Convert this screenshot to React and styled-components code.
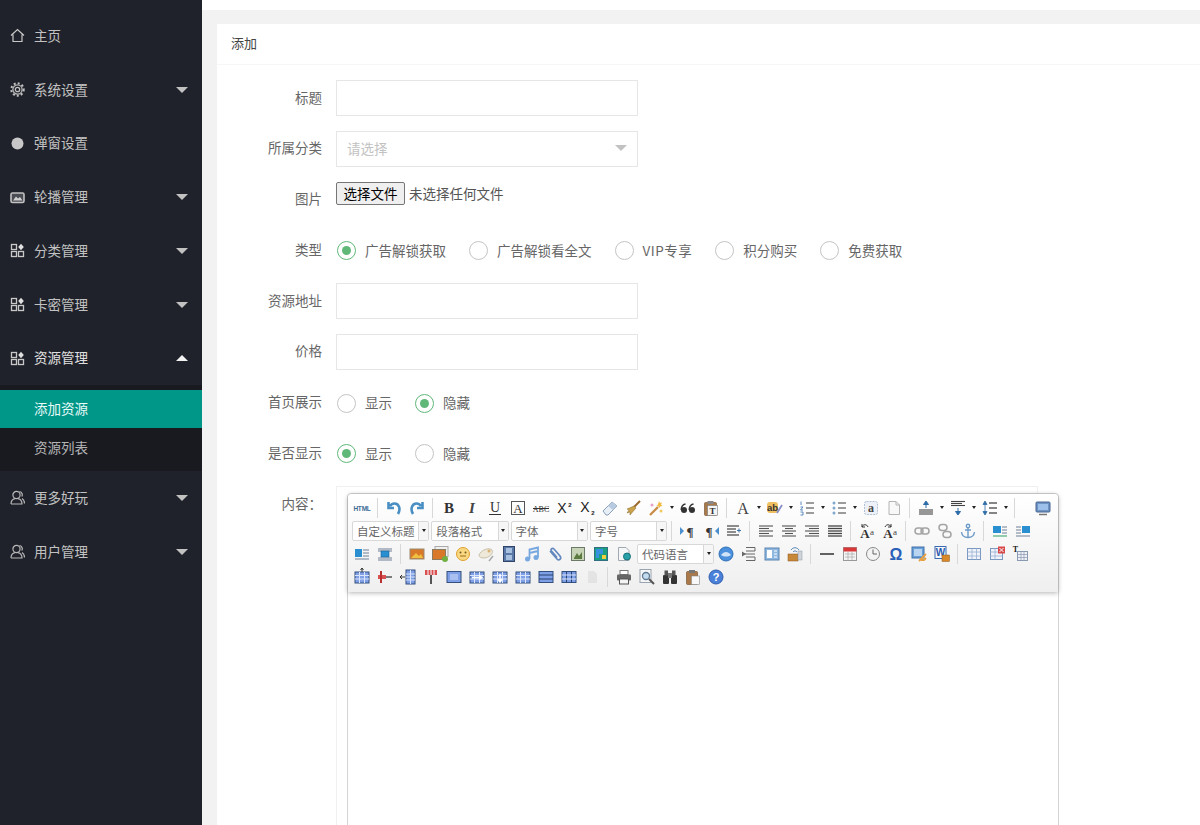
import React from 'react';
import styled, { createGlobalStyle } from 'styled-components';

const GlobalStyle = createGlobalStyle`
    html, body {
        margin: 0;
        height: 825px;
        overflow: hidden;
        background: #f2f2f2;
        font-family: "Noto Sans CJK SC", "Noto Sans", sans-serif;
    }
`

const Page = styled.div`
    display: grid;
    grid-template-columns: 202px 1fr;
    height: 825px;
    overflow: hidden;
`

const Sidebar = styled.nav`
    background: #20222b;
    padding-top: 9px;
    height: 825px;
    box-sizing: border-box;
`

const NavItem = styled.div`
    height: 53.75px;
    display: flex;
    align-items: center;
    padding: 0 14px 0 10px;
    gap: 9px;
    font-size: 13.5px;
    color: ${props => props.$open ? '#e0e0e0' : '#c2c2c2'};
`

const NavIcon = styled.svg`
    width: 15px;
    height: 15px;
    flex: none;
`

const NavText = styled.span`
    flex: 1;
    padding-bottom: 2px;
`

const Caret = styled.i`
    width: 0;
    height: 0;
    border-left: 6px solid transparent;
    border-right: 6px solid transparent;
    border-top: ${props => props.$up ? '0' : '6px solid #c2c2c2'};
    border-bottom: ${props => props.$up ? '6px solid #f2f2f2' : '0'};
`

const SubList = styled.div`
    background: #191a20;
    padding: 4.75px 0 4px;
`

const SubItem = styled.div`
    height: ${props => props.$active ? '38px' : '39px'};
    padding: 0 0 2px 34px;
    box-sizing: border-box;
    display: flex;
    align-items: center;
    font-size: 13.5px;
    background: ${props => props.$active ? '#009688' : 'transparent'};
    color: ${props => props.$active ? '#e8fbf8' : '#b4b4b4'};
`

const Main = styled.main`
    min-width: 0;
`

const TopBar = styled.div`
    height: 10px;
    background: #fff;
`

const Content = styled.div`
    padding: 14px 0 0 15px;
`

const Card = styled.section`
    background: #fff;
`

const CardHead = styled.div`
    height: 40px;
    line-height: 38px;
    padding-left: 14px;
    font-size: 13px;
    color: #444;
    border-bottom: 1px solid #f6f6f6;
`

const Form = styled.form`
    padding-top: 15px;
`

const Row = styled.div`
    display: flex;
    align-items: ${props => props.$top ? 'flex-start' : 'center'};
    height: ${props => props.$top ? 'auto' : '36px'};
    margin-bottom: 14.75px;
`

const Label = styled.label`
    width: 105px;
    margin-right: 14px;
    flex: none;
    text-align: right;
    font-size: 13.5px;
    color: #666;
    padding-top: ${props => props.$pad || 0}px;
    padding-bottom: ${props => props.$pad ? 0 : 3}px;
`

const TextInput = styled.div`
    width: 302px;
    height: 36.5px;
    box-sizing: border-box;
    border: 1px solid #e6e6e6;
    display: flex;
    align-items: center;
    justify-content: space-between;
    padding: 0 10px 2px;
    font-size: 13.5px;
    color: #c2c2c2;
`

const SelectArrow = styled.i`
    width: 0;
    height: 0;
    border-left: 6px solid transparent;
    border-right: 6px solid transparent;
    border-top: 6px solid #c2c2c2;
`

const FileRow = styled.div`
    display: flex;
    align-items: center;
    gap: 4px;
    align-self: flex-start;
    font-size: 13.5px;
    color: #555;
`

const FileButton = styled.button`
    width: 69px;
    height: 23px;
    padding: 0 0 1px;
    box-sizing: border-box;
    border: 1px solid #767676;
    border-radius: 2px;
    background: #efefef;
    color: #000;
    font: 13.5px "Noto Sans CJK SC", sans-serif;
`

const RadioGroup = styled.div`
    display: flex;
    margin-left: 1px;
    padding-top: 1px;
`

const Radio = styled.span`
    display: flex;
    align-items: center;
    gap: 9px;
    margin-right: 23px;
    font-size: 13.5px;
    color: #666;
`

const RadioText = styled.span`
    padding-bottom: 2px;
    letter-spacing: ${props => props.$latin ? '0.5px' : '0'};
`

const RadioMark = styled.i`
    width: 19px;
    height: 19px;
    box-sizing: border-box;
    border-radius: 50%;
    border: 1px solid ${props => props.$on ? '#5fb878' : '#c4c4c4'};
    display: flex;
    align-items: center;
    justify-content: center;

    &::after {
        content: "";
        width: 9px;
        height: 9px;
        border-radius: 50%;
        background: ${props => props.$on ? '#5fb878' : 'transparent'};
    }
`

const EditorFrame = styled.div`
    width: 702px;
    box-sizing: border-box;
    border: 1px solid #f0f0f0;
    padding: 6px 0 0 10px;
`

const Editor = styled.div`
    width: 712px;
    height: 340px;
    box-sizing: border-box;
    border: 1px solid #d4d4d4;
    border-radius: 4px 4px 0 0;
    background: #fff;
`

const Toolbar = styled.div`
    height: 98px;
    box-sizing: border-box;
    padding: 2px 0 0 2px;
    background: linear-gradient(#ffffff, #efefef);
    box-shadow: 0 1px 5px rgba(0, 0, 0, 0.3);
    border-radius: 4px 4px 0 0;
`

const ToolRow = styled.div`
    display: flex;
    align-items: center;
    height: 23px;
`

const ToolButton = styled.span`
    width: 23px;
    height: 23px;
    flex: none;
    margin-left: ${props => props.$gap || 0}px;
    display: flex;
    align-items: center;
    justify-content: center;
    opacity: ${props => props.$faded ? 0.25 : 1};
`

const ToolIcon = styled.svg`
    width: 16px;
    height: 16px;
    overflow: visible;
`

const ToolCaret = styled.i`
    width: 9px;
    display: flex;
    justify-content: center;

    &::after {
        content: "";
        border-left: 2.5px solid transparent;
        border-right: 2.5px solid transparent;
        border-top: 3px solid #222;
    }
`

const ToolSep = styled.i`
    width: 9px;
    height: 20px;
    display: flex;
    justify-content: center;

    &::after {
        content: "";
        width: 1px;
        background: #d8d8d8;
    }
`

const ToolSelect = styled.div`
    width: 77.3px;
    height: 20px;
    margin-left: 2px;
    box-sizing: border-box;
    border: 1px solid #d8d8d8;
    border-radius: 2px;
    background: #fff;
    display: flex;
    align-items: center;
    font-size: 11.5px;
    color: #666;
`

const ToolSelectText = styled.span`
    flex: 1;
    padding-left: 4px;
    white-space: nowrap;
    overflow: hidden;
`

const ToolSelectArrow = styled.i`
    width: 9px;
    height: 18px;
    flex: none;
    border-left: 1px solid #d8d8d8;
    background: #f6f6f6;
    display: flex;
    align-items: center;
    justify-content: center;

    &::after {
        content: "";
        border-left: 2.5px solid transparent;
        border-right: 2.5px solid transparent;
        border-top: 3px solid #222;
    }
`

const navIcons = {
    home: <path d="M1 7.5 7.5 1.5 14 7.5M3 6.5V13.5H12V6.5" fill="none" stroke="#c8c8c8" strokeWidth="1.2" />,
    gear: <>
        <circle cx="7.5" cy="7.5" r="2.2" fill="none" stroke="#c2c2c2" strokeWidth="1.3" />
        <circle cx="7.5" cy="7.5" r="4.6" fill="none" stroke="#b4b4b4" strokeWidth="1.3" />
        <circle cx="7.5" cy="7.5" r="6.2" fill="none" stroke="#c2c2c2" strokeWidth="2" strokeDasharray="2 2.1" />
    </>,
    dot: <circle cx="7.5" cy="7.5" r="6" fill="#c8c8c8" />,
    picture: <>
        <rect x="1" y="3" width="13" height="9.5" rx="1.5" fill="#4a4c54" stroke="#c2c2c2" strokeWidth="1.6" />
        <path d="M3 10.5 6 6.500l2 2 2-1.500 2.500 3.500z" fill="#d0d0d0" />
    </>,
    app: <>
        <rect x="1.500" y="1.500" width="5" height="5" fill="none" stroke="#c8c8c8" strokeWidth="1.300" />
        <rect x="1.500" y="8.500" width="5" height="5" fill="none" stroke="#c8c8c8" strokeWidth="1.300" />
        <rect x="8.500" y="8.500" width="5" height="5" fill="none" stroke="#c8c8c8" strokeWidth="1.300" />
        <path d="M11 .8 13.800 4 11 7.200 8.200 4z" fill="#e0e0e0" />
    </>,
    user: <>
        <circle cx="6.500" cy="5" r="3.600" fill="none" stroke="#b8b8b8" strokeWidth="1.200" />
        <path d="M1 14c0-3.200 2-5 4-5.400M8 8.600c2 .4 4 2.200 4 5.400H1M9.500 1.500c2.500.4 3.400 3 2.300 5M12 8.500c1.500.8 2.500 2.500 2.500 5" fill="none" stroke="#b8b8b8" strokeWidth="1.200" />
    </>,
}

const navTop = [
    { icon: 'home', text: '主页' },
    { icon: 'gear', text: '系统设置', caret: true },
    { icon: 'dot', text: '弹窗设置' },
    { icon: 'picture', text: '轮播管理', caret: true },
    { icon: 'app', text: '分类管理', caret: true },
    { icon: 'app', text: '卡密管理', caret: true },
]

function Nav({ icon, text, caret, open }) {
    return <NavItem $open={open}>
        <NavIcon viewBox="0 0 15 15">{navIcons[icon]}</NavIcon>
        <NavText>{text}</NavText>
        {caret && <Caret $up={open} />}
    </NavItem>
}

const serif = '"Liberation Serif", serif'
const sans = '"Liberation Sans", sans-serif'
const lines = (rows, color = '#555', w = 1) => rows.map(([x1, y, x2], i) =>
    <line key={i} x1={x1} y1={y} x2={x2} y2={y} stroke={color} strokeWidth={w} />)

const gridIcon = (extra, fill = '#7f9fe6') => <>
    <rect x="1" y="3" width="14" height="11" fill={fill} stroke="#33507f" />
    <path d="M1 6.500H15M1 10H15M5.500 3V14M10.500 3V14" stroke="#dbe6fb" strokeWidth="1" />
    {extra}
</>

const imageWrap = (y1, y2, x) => <>
    {lines([[1, 3, 15], [1, 5, 15], [1, 12, 15], [1, 14, 15]], '#6d7f95')}
    <rect x={x} y={y1} width="8" height={y2} fill="#2a8fd0" stroke="#1a5f98" strokeWidth=".6" />
</>

const toolIcons = {
    html: <text x="8" y="11" fontSize="6.500" fontWeight="700" letterSpacing="-.2" fill="#3d6d96" textAnchor="middle" fontFamily={sans}>HTML</text>,
    undo: <path d="M12 14C15 9 13 3.500 8.500 3.500 6.500 3.500 5 4.500 4 6M2.500 2V8H8" fill="none" stroke="#4a8fc4" strokeWidth="2.600" />,
    redo: <path d="M4 14C1 9 3 3.500 7.500 3.500 9.500 3.500 11 4.500 12 6M13.500 2V8H8" fill="none" stroke="#4a8fc4" strokeWidth="2.600" />,
    bold: <text x="8" y="13" fontSize="15" fontWeight="700" fill="#333" textAnchor="middle" fontFamily={serif}>B</text>,
    italic: <text x="8" y="13" fontSize="15" fontStyle="italic" fontWeight="700" fill="#444" textAnchor="middle" fontFamily={serif}>I</text>,
    underline: <>
        <text x="8" y="12" fontSize="14" fill="#333" textAnchor="middle" fontFamily={serif}>U</text>
        <line x1="2" y1="14.500" x2="14" y2="14.500" stroke="#333" />
    </>,
    fontborder: <>
        <rect x="1.500" y="1.500" width="13" height="13" fill="none" stroke="#555" />
        <text x="8" y="12.500" fontSize="13" fill="#333" textAnchor="middle" fontFamily={serif}>A</text>
    </>,
    strike: <>
        <text x="8" y="11.500" fontSize="8" fill="#333" textAnchor="middle" fontFamily={serif}>ABC</text>
        <line x1="0" y1="8.500" x2="16" y2="8.500" stroke="#333" />
    </>,
    sup: <>
        <text x="6" y="13" fontSize="14" fill="#222" textAnchor="middle" fontFamily={sans}>X</text>
        <text x="14" y="7" fontSize="6" fontWeight="700" fill="#222" textAnchor="middle" fontFamily={sans}>2</text>
    </>,
    sub: <>
        <text x="6" y="12" fontSize="14" fill="#222" textAnchor="middle" fontFamily={sans}>X</text>
        <text x="14" y="15" fontSize="6" fontWeight="700" fill="#222" textAnchor="middle" fontFamily={sans}>2</text>
    </>,
    eraser: <>
        <path d="M1 11 10 2l5 4-9 9H4z" fill="#e8eef6" stroke="#8aa0b8" />
        <path d="M10 2l5 4-4 4-5-4z" fill="#b8cbe0" />
    </>,
    brush: <>
        <path d="M15 1 9 7" stroke="#9a6a2c" strokeWidth="2" />
        <path d="M9 6 2 9l2 1-2 3 3-1 0 3 6-7z" fill="#c9a24c" stroke="#8a6a2a" strokeWidth=".5" />
    </>,
    wand: <>
        <path d="M2 15 10 7" stroke="#c98a44" strokeWidth="2.200" />
        <path d="M11 1l1 2 2-.5-1 2 1.500 1.500-2 .3L11 8l-.7-2-2-.5 1.700-1z" fill="#f0b840" />
        <circle cx="4" cy="5" r="1.500" fill="#e8a0c8" />
        <circle cx="13" cy="11" r="1.500" fill="#f0c860" />
    </>,
    quote: <>
        <circle cx="4" cy="10" r="3" fill="#333" />
        <circle cx="12" cy="10" r="3" fill="#333" />
        <path d="M1.200 10C1.200 6.500 3 4.500 5.500 4M9.200 10C9.200 6.500 11 4.500 13.500 4" fill="none" stroke="#333" strokeWidth="1.400" />
    </>,
    pasteText: <>
        <rect x="1.500" y="2.500" width="12" height="13" rx="1" fill="#a9794a" stroke="#6f4a28" strokeWidth=".6" />
        <rect x="4.500" y="1" width="6" height="3" fill="#888" />
        <rect x="4.500" y="5.500" width="10" height="10" fill="#f4f4f4" stroke="#777" strokeWidth=".6" />
        <text x="9.500" y="14" fontSize="9" fontWeight="700" fill="#333" textAnchor="middle" fontFamily={serif}>T</text>
    </>,
    fontColor: <text x="8" y="14" fontSize="16" fill="#444" textAnchor="middle" fontFamily={serif}>A</text>,
    highlight: <>
        <rect x="0" y="2" width="11" height="11" rx="3" fill="#f0c060" />
        <text x="5.500" y="11" fontSize="9.500" fontWeight="700" fill="#333" textAnchor="middle" fontFamily={sans}>ab</text>
        <path d="M10 13 15 5" stroke="#8a8ac8" strokeWidth="1.800" />
    </>,
    ol: <>
        {lines([[7, 3, 15], [7, 8, 15], [7, 13, 15]], '#666', 1.300)}
        <path d="M2 1.500V5M1.500 7H4L1.500 10H4M1.500 12H4V15H1.500" fill="none" stroke="#4a80b8" strokeWidth=".9" />
    </>,
    ul: <>
        {lines([[7, 3, 15], [7, 8, 15], [7, 13, 15]], '#666', 1.300)}
        <circle cx="3" cy="3" r="1.500" fill="#7fa8cc" />
        <circle cx="3" cy="8" r="1.500" fill="#7fa8cc" />
        <circle cx="3" cy="13" r="1.500" fill="#7fa8cc" />
    </>,
    selectAll: <>
        <rect x="1.500" y="1.500" width="13" height="13" rx="2" fill="#eef2f8" stroke="#b0c0d4" strokeDasharray="2 1" />
        <text x="8" y="12" fontSize="12" fontWeight="700" fill="#444" textAnchor="middle" fontFamily={serif}>a</text>
    </>,
    doc: <path d="M3 1.500H10L13.500 5V14.500H3zM10 1.500V5H13.500" fill="#f8f8f8" stroke="#b4b4b4" />,
    spaceTop: <>
        {lines([[1, 10, 15], [1, 12, 15], [1, 14, 15]], '#444', 1.100)}
        <path d="M8 1 5.500 4.500H10.500zM8 4V8" fill="#2f6da8" stroke="#2f6da8" />
    </>,
    spaceBottom: <>
        {lines([[1, 1.500, 15], [1, 3.500, 12], [1, 5.500, 15]], '#444', 1.100)}
        <path d="M8 15 5.500 11.500H10.500zM8 8V12" fill="#2f6da8" stroke="#2f6da8" />
    </>,
    lineHeight: <>
        {lines([[7, 3, 15], [7, 8, 15], [7, 13, 15]], '#444', 1.300)}
        <path d="M3 1 1 4.500H5zM3 15 1 11.500H5zM3 4V12" fill="#2f6da8" stroke="#2f6da8" strokeWidth=".8" />
    </>,
    preview: <>
        <rect x="1" y="2" width="14" height="10" rx="1" fill="#6f93c4" stroke="#46658f" />
        <rect x="3" y="4" width="10" height="6" fill="#9dc0ea" />
        <path d="M4 14.500H12" stroke="#777" strokeWidth="1.500" />
    </>,
    ltr: <>
        <path d="M0 4 4 8 0 12z" fill="#4a90d0" />
        <text x="10" y="13" fontSize="13" fontWeight="700" fill="#333" textAnchor="middle" fontFamily={serif}>¶</text>
    </>,
    rtl: <>
        <path d="M16 4 12 8 16 12z" fill="#4a90d0" />
        <text x="6" y="13" fontSize="13" fontWeight="700" fill="#333" textAnchor="middle" fontFamily={serif}>¶</text>
    </>,
    indent: <>
        {lines([[1, 3, 13], [1, 6, 10], [1, 9, 10], [1, 12, 13]], '#444', 1.200)}
        <path d="M11 7.500H15M13 5.500V9.500" stroke="#3a70a8" />
    </>,
    alignLeft: lines([[1, 3, 15], [1, 5.500, 11], [1, 8, 15], [1, 10.500, 11], [1, 13, 15]], '#555', 1.100),
    alignCenter: lines([[1, 3, 15], [4, 5.500, 12], [1, 8, 15], [4, 10.500, 12], [1, 13, 15]], '#555', 1.100),
    alignRight: lines([[1, 3, 15], [5, 5.500, 15], [1, 8, 15], [5, 10.500, 15], [1, 13, 15]], '#555', 1.100),
    justify: lines([[1, 3, 15], [1, 5.500, 15], [1, 8, 15], [1, 10.500, 15], [1, 13, 15]], '#444', 1.300),
    upper: <>
        <text x="6" y="15" fontSize="13" fontWeight="700" fill="#333" textAnchor="middle" fontFamily={serif}>A</text>
        <text x="13" y="12" fontSize="9" fill="#444" textAnchor="middle" fontFamily={serif}>a</text>
        <path d="M3 4C4 1 8 1 9 4M3 1V4H6" fill="none" stroke="#333" />
    </>,
    lower: <>
        <text x="6" y="15" fontSize="13" fontWeight="700" fill="#333" textAnchor="middle" fontFamily={serif}>A</text>
        <text x="13" y="12" fontSize="9" fill="#444" textAnchor="middle" fontFamily={serif}>a</text>
        <path d="M9 4C8 1 4 1 3 4M9 1V4H6" fill="none" stroke="#333" />
    </>,
    link: <>
        <rect x="1" y="5" width="8" height="6" rx="3" fill="none" stroke="#a4a4a4" strokeWidth="1.500" />
        <rect x="7" y="5" width="8" height="6" rx="3" fill="none" stroke="#a4a4a4" strokeWidth="1.500" />
    </>,
    unlink: <>
        <rect x="2" y="1.500" width="8" height="6" rx="3" fill="none" stroke="#a4a4a4" strokeWidth="1.500" />
        <rect x="6" y="8.500" width="8" height="6" rx="3" fill="none" stroke="#a4a4a4" strokeWidth="1.500" />
    </>,
    anchor: <g fill="none" stroke="#6d9cc8" strokeWidth="1.400">
        <circle cx="8" cy="3" r="1.700" />
        <path d="M8 5V14.500M5 7H11M1.500 9C2 13 5 14.500 8 14.500S14 13 14.500 9" />
    </g>,
    imgLeft: <>
        <rect x="1" y="3" width="8" height="7" fill="#2a8fd0" />
        {lines([[10, 4, 15], [10, 7, 15], [10, 10, 15]], '#6d7f95')}
        <line x1="1" y1="13" x2="15" y2="13" stroke="#2aa060" />
    </>,
    imgRight: <>
        <rect x="7" y="3" width="8" height="7" fill="#2a8fd0" />
        {lines([[1, 4, 6], [1, 7, 6], [1, 10, 6], [1, 13, 15]], '#6d7f95')}
    </>,
    imgNone: <>
        <rect x="1" y="3" width="7" height="8" fill="#2a8fd0" />
        {lines([[9, 4, 15], [9, 7, 15], [9, 10, 15], [1, 13, 15]], '#6d7f95')}
    </>,
    imgCenter: imageWrap(5, 6, 4),
    image: <>
        <rect x="1" y="3" width="14" height="10" fill="#d87828" stroke="#9a8a70" />
        <path d="M2 12 7 7l3 3 2-2 2 4z" fill="#f0c040" />
    </>,
    images: <>
        <rect x="3" y="0.500" width="13" height="10" fill="#f0f0f0" stroke="#aaa" />
        <rect x="0.500" y="3.500" width="13" height="10" fill="#d87828" stroke="#8a7a60" />
        <circle cx="13" cy="13" r="3" fill="#70b040" />
    </>,
    emoji: <>
        <circle cx="8" cy="8" r="6.500" fill="#f8d880" stroke="#e0a030" />
        <circle cx="5.500" cy="6.500" r="1" fill="#7a5a20" />
        <circle cx="10.500" cy="6.500" r="1" fill="#7a5a20" />
        <path d="M5 10H11" stroke="#a06a20" />
    </>,
    scrawl: <>
        <path d="M1 9C3 4 11 1 14 4 16 7 11 12 6 12 3 12 1 11 1 9z" fill="#eee8d8" stroke="#c8c0a8" />
        <circle cx="11" cy="5" r="1.500" fill="#d8b070" />
        <path d="M11 15 15 10" stroke="#a8a8a8" strokeWidth="1.500" />
    </>,
    video: <>
        <rect x="2.500" y="0.500" width="11" height="15" fill="#5a78a8" stroke="#2f4468" />
        <rect x="5" y="2" width="6" height="5" fill="#a8c0e0" />
        <rect x="5" y="9" width="6" height="5" fill="#a8c0e0" />
    </>,
    music: <>
        <path d="M5.500 13V3.500L14 1.500V11.500M5.500 7 14 5" fill="none" stroke="#78a8e0" strokeWidth="1.800" />
        <circle cx="3.500" cy="13" r="2.500" fill="#78a8e0" />
        <circle cx="12" cy="11.500" r="2.500" fill="#78a8e0" />
    </>,
    attach: <path d="M3 5 10 13C12 15 15 13 13 10L7 3C5.500 1.500 3 3 4.500 5L10 11.500" fill="none" stroke="#6488c0" strokeWidth="1.700" />,
    map: <>
        <rect x="1.500" y="1.500" width="13" height="13" fill="#c8d4b8" stroke="#6d7a6a" />
        <path d="M4 12 7 7l2 3 3-4v7H4z" fill="#5a7a40" />
    </>,
    gmap: <>
        <rect x="1.500" y="1.500" width="13" height="13" fill="#18a080" stroke="#2f6f80" />
        <path d="M3 3H10V8H6V12H3z" fill="#3890e0" />
        <path d="M9 9H13V13H9z" fill="#f0d040" />
    </>,
    frame: <>
        <path d="M2.500 1.500H10L13 4.500V14.500H2.500z" fill="#f4f6f8" stroke="#a0a8b0" />
        <circle cx="11" cy="10.500" r="3.500" fill="#28a0a8" stroke="#1a7078" />
    </>,
    webapp: <>
        <circle cx="8" cy="8" r="7" fill="#4a90dc" stroke="#3070b8" />
        <path d="M3 9C6 5 10 5 13 9 10 11 6 11 3 9z" fill="#cfe2f8" />
    </>,
    pagebreak: <>
        <path d="M5 1.500H14V5H5M2 8H14M5 11H14V14.500H5" fill="none" stroke="#666" />
        <path d="M5 8 1 5.500V10.500z" fill="#666" />
    </>,
    template: <>
        <rect x="1" y="2" width="14" height="12" fill="#8fb8e0" stroke="#5a84b0" />
        <rect x="3" y="4" width="5" height="8" fill="#fff" />
        <path d="M10 5H13M10 8H13M10 11H13" stroke="#fff" />
    </>,
    background: <>
        <path d="M4 4C6 1 10 1 12 4M6 6C7 4.500 9 4.500 10 6" fill="none" stroke="#5a88b8" />
        <rect x="1" y="8" width="10" height="7" fill="#c8883a" stroke="#8a5a20" strokeWidth=".5" />
        <rect x="11" y="5" width="4" height="9" fill="#d0d4d8" stroke="#8a98a8" strokeWidth=".5" />
    </>,
    hr: <line x1="1" y1="8" x2="15" y2="8" stroke="#222" strokeWidth="1.400" />,
    date: <>
        <rect x="1.500" y="1.500" width="13" height="13" fill="#f4f4f4" stroke="#999" />
        <rect x="1.500" y="1.500" width="13" height="4" fill="#d83838" />
        <path d="M3 8H13M3 11H13M6 6V14M10 6V14" stroke="#aaa" strokeWidth=".7" />
    </>,
    time: <>
        <circle cx="8" cy="8" r="6.500" fill="#f4f4f4" stroke="#888" />
        <path d="M8 3.500V8H12" fill="none" stroke="#666" />
    </>,
    omega: <text x="8" y="14" fontSize="16" fontWeight="700" fill="#2a5fb8" textAnchor="middle" fontFamily={sans}>Ω</text>,
    wordImage: <>
        <rect x="1" y="1" width="12" height="11" fill="#6aa0d8" stroke="#4070a8" />
        <rect x="3" y="3" width="8" height="7" fill="#b8d4f0" />
        <path d="M8 15 15 8M10 14 13 14 15 12" stroke="#e8a040" strokeWidth="1.800" fill="none" />
    </>,
    wordPaste: <>
        <rect x="1" y="0.500" width="11" height="12" fill="#f8f8f8" stroke="#3a6ab0" />
        <text x="6.500" y="10" fontSize="10" fontWeight="700" fill="#2a5ab0" textAnchor="middle" fontFamily={sans}>W</text>
        <rect x="8" y="9" width="7.500" height="6.500" fill="#d88828" stroke="#8a5a20" strokeWidth=".5" />
    </>,
    table: <>
        <rect x="1.500" y="2.500" width="13" height="11" fill="#f0f4fa" stroke="#7a98c0" />
        <path d="M1.500 6H14.500M1.500 10H14.500M6 2.500V13.500M10.500 2.500V13.500" stroke="#98b0d0" strokeWidth=".8" />
    </>,
    delTable: <>
        <rect x="1.500" y="2.500" width="12" height="11" fill="#f0f4fa" stroke="#7a98c0" />
        <path d="M1.500 6H13.500M1.500 10H13.500M6 2.500V13.500" stroke="#98b0d0" strokeWidth=".8" />
        <rect x="9" y="0.500" width="7" height="7" fill="#d84848" />
        <path d="M10.500 2 14.500 6M14.500 2 10.500 6" stroke="#fff" />
    </>,
    caption: <>
        <text x="3.500" y="6" fontSize="8" fontWeight="700" fill="#222" textAnchor="middle" fontFamily={serif}>T</text>
        <rect x="5.500" y="5.500" width="10" height="9" fill="#eef2f8" stroke="#8a9ab0" />
        <path d="M5.500 8.500H15.500M5.500 11.500H15.500M9 5.500V14.500M12 5.500V14.500" stroke="#8a9ab0" strokeWidth=".7" />
    </>,
    insRow: gridIcon(<path d="M8 -1V3M6.500 1 8 -1 9.500 1" fill="none" stroke="#333" />),
    delRow: <>
        <rect x="1" y="6" width="8" height="4" fill="#d85050" />
        <path d="M4 2V14" stroke="#b83030" strokeWidth="2" />
        <path d="M9 8H15" stroke="#555" strokeWidth="1.500" />
    </>,
    insCol: <>
        <path d="M5 8H0M2 6 0 8 2 10" fill="none" stroke="#333" />
        <rect x="6" y="1" width="9" height="14" fill="#7f9fe6" stroke="#33507f" />
        <path d="M6 5H15M6 8H15M6 11H15M10.500 1V15" stroke="#dbe6fb" />
    </>,
    delCol: <>
        <path d="M2 1H14V6H2z" fill="#d85050" />
        <path d="M5 1V6M8 1V15M11 1V6" stroke="#fff" />
        <path d="M8 6V15" stroke="#555" strokeWidth="2" />
    </>,
    merge: <>
        <rect x="1" y="2.500" width="14" height="11" fill="#7f9fe6" stroke="#33507f" />
        <rect x="4" y="5" width="8" height="6" fill="#aac0f0" />
    </>,
    mergeRight: gridIcon(<path d="M3 8.500H12M10 6.500 13 8.500 10 10.500" fill="none" stroke="#fff" strokeWidth="1.500" />),
    mergeDown: gridIcon(<path d="M8 5V12M6 10 8 13 10 10" fill="none" stroke="#fff" strokeWidth="1.500" />),
    splitCells: gridIcon(null),
    splitRows: <>
        <rect x="1" y="2.500" width="14" height="11" fill="#7f9fe6" stroke="#33507f" />
        <path d="M1 6H15M1 10H15" stroke="#26406f" />
    </>,
    splitCols: <>
        <rect x="1" y="2.500" width="14" height="11" fill="#7f9fe6" stroke="#33507f" />
        <path d="M5.500 2.500V13.500M10.500 2.500V13.500" stroke="#26406f" />
        <path d="M1 6H15M1 10H15" stroke="#dbe6fb" />
    </>,
    print: <>
        <rect x="4" y="1.500" width="8" height="4" fill="#fff" stroke="#777" />
        <rect x="1" y="5.500" width="14" height="6" rx="1" fill="#666" />
        <rect x="3.500" y="10" width="9" height="5" fill="#f4f4f4" stroke="#555" />
    </>,
    search: <>
        <rect x="1" y="0.500" width="11" height="13" fill="#f4f6f8" stroke="#98a4b0" />
        <circle cx="7" cy="7" r="3.500" fill="#c4dcf0" stroke="#607890" strokeWidth="1.300" />
        <path d="M10 10 15 15" stroke="#555" strokeWidth="2" />
    </>,
    binoculars: <>
        <rect x="1" y="6" width="6" height="9" rx="1" fill="#333" />
        <rect x="9" y="6" width="6" height="9" rx="1" fill="#333" />
        <rect x="2.500" y="1.500" width="3.500" height="5" fill="#555" />
        <rect x="10" y="1.500" width="3.500" height="5" fill="#555" />
        <rect x="6" y="4" width="4" height="5" fill="#777" />
    </>,
    paste: <>
        <rect x="1.500" y="2.500" width="11" height="13" rx="1" fill="#a9794a" stroke="#6f4a28" strokeWidth=".6" />
        <rect x="4" y="1" width="6" height="3" fill="#777" />
        <rect x="6.500" y="7" width="8" height="8.500" fill="#f8f8f8" stroke="#888" strokeWidth=".6" />
    </>,
    help: <>
        <circle cx="8" cy="8" r="7" fill="#4a80d8" stroke="#2f5fb0" />
        <text x="8" y="12" fontSize="11" fontWeight="700" fill="#fff" textAnchor="middle" fontFamily={sans}>?</text>
    </>,
    blank: <path d="M4 2H10L13 5V14H4z" fill="#bbb" />,
}

// | separator, ^ small caret after the button before it, [text] select box
const toolRows = [
    'html | undo redo | bold italic underline fontborder strike sup sub eraser brush wand ^ quote pasteText | fontColor ^ highlight ^ ol ^ ul ^ selectAll doc | spaceTop ^ spaceBottom ^ lineHeight ^ | +preview',
    '[自定义标题] [段落格式] [字体] [字号] | ltr rtl indent | alignLeft alignCenter alignRight justify | upper lower | link unlink anchor | imgLeft imgRight',
    'imgNone imgCenter | image images emoji scrawl video music attach map gmap frame [代码语言] webapp pagebreak template background | hr date time omega wordImage wordPaste | table delTable caption',
    'insRow delRow insCol delCol merge mergeRight mergeDown splitCells splitRows splitCols ~blank | print search binoculars paste help',
]

function Tool({ token }) {
    if (token === '|') return <ToolSep />
    if (token === '^') return <ToolCaret />
    if (token[0] === '[') {
        return <ToolSelect>
            <ToolSelectText>{token.slice(1, -1)}</ToolSelectText>
            <ToolSelectArrow />
        </ToolSelect>
    }
    const name = token.replace(/[+~]/, '')
    return <ToolButton $gap={token[0] === '+' ? 12 : 0} $faded={token[0] === '~'}>
        <ToolIcon viewBox="0 0 16 16">{toolIcons[name]}</ToolIcon>
    </ToolButton>
}

function RadioOption({ text, on, latin }) {
    return <Radio>
        <RadioMark $on={on} />
        <RadioText $latin={latin}>{text}</RadioText>
    </Radio>
}

function App() {
    return <>
        <GlobalStyle />
        <Page>
            <Sidebar>
                {navTop.map(item => <Nav key={item.text} {...item} />)}
                <Nav icon="app" text="资源管理" caret open />
                <SubList>
                    <SubItem $active>添加资源</SubItem>
                    <SubItem>资源列表</SubItem>
                </SubList>
                <Nav icon="user" text="更多好玩" caret />
                <Nav icon="user" text="用户管理" caret />
            </Sidebar>
            <Main>
                <TopBar />
                <Content>
                    <Card>
                        <CardHead>添加</CardHead>
                        <Form>
                            <Row>
                                <Label>标题</Label>
                                <TextInput />
                            </Row>
                            <Row>
                                <Label>所属分类</Label>
                                <TextInput>请选择<SelectArrow /></TextInput>
                            </Row>
                            <Row>
                                <Label>图片</Label>
                                <FileRow>
                                    <FileButton type="button">选择文件</FileButton>
                                    未选择任何文件
                                </FileRow>
                            </Row>
                            <Row>
                                <Label>类型</Label>
                                <RadioGroup>
                                    <RadioOption text="广告解锁获取" on />
                                    <RadioOption text="广告解锁看全文" />
                                    <RadioOption text="VIP专享" latin />
                                    <RadioOption text="积分购买" />
                                    <RadioOption text="免费获取" />
                                </RadioGroup>
                            </Row>
                            <Row>
                                <Label>资源地址</Label>
                                <TextInput />
                            </Row>
                            <Row>
                                <Label>价格</Label>
                                <TextInput />
                            </Row>
                            <Row>
                                <Label>首页展示</Label>
                                <RadioGroup>
                                    <RadioOption text="显示" />
                                    <RadioOption text="隐藏" on />
                                </RadioGroup>
                            </Row>
                            <Row>
                                <Label>是否显示</Label>
                                <RadioGroup>
                                    <RadioOption text="显示" on />
                                    <RadioOption text="隐藏" />
                                </RadioGroup>
                            </Row>
                            <Row $top>
                                <Label $pad={7}>内容：</Label>
                                <EditorFrame>
                                    <Editor>
                                        <Toolbar>
                                            {toolRows.map((row, i) => <ToolRow key={i}>
                                                {row.split(' ').map((token, j) => <Tool key={j} token={token} />)}
                                            </ToolRow>)}
                                        </Toolbar>
                                    </Editor>
                                </EditorFrame>
                            </Row>
                        </Form>
                    </Card>
                </Content>
            </Main>
        </Page>
    </>
}

export default App;
